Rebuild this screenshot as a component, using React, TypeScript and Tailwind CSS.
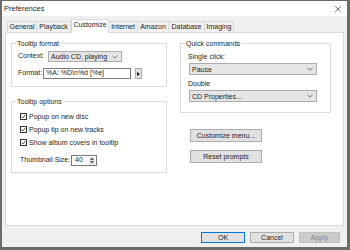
import React from 'react';

const tabs = [
  { name: 'General', w: 30 },
  { name: 'Playback', w: 34 },
  { name: 'Customize', w: 38 },
  { name: 'Internet', w: 29 },
  { name: 'Amazon', w: 31 },
  { name: 'Database', w: 36 },
  { name: 'Imaging', w: 29 },
];

const Chevron = () => (
  <svg width="6" height="4" viewBox="0 0 6 4" className="shrink-0">
    <path d="M0.5 0.8 L3 3.2 L5.5 0.8" fill="none" stroke="#555" strokeWidth="0.8" />
  </svg>
);

const Combo = ({ value, w, h }: { value: string; w: number; h: number }) => (
  <div
    className="flex items-center justify-between bg-[#e5e5e5] border border-[#acacac] pl-[2px] pr-[3px] shrink-0"
    style={{ width: w, height: h }}
  >
    <span className="leading-none">{value}</span>
    <Chevron />
  </div>
);

const Check = ({ label }: { label: string }) => (
  <div className="flex items-center h-[13px] gap-[2px]">
    <div className="w-[7px] h-[7px] border border-[#333] bg-white flex items-center justify-center">
      <svg width="5" height="5" viewBox="0 0 5 5">
        <path d="M0.6 2.6 L1.9 3.9 L4.4 0.9" fill="none" stroke="#222" strokeWidth="0.8" />
      </svg>
    </div>
    <span className="leading-none">{label}</span>
  </div>
);

const Group = ({ title, className, children }: { title: string; className: string; children: React.ReactNode }) => (
  <div className={`relative border border-[#dcdcdc] ${className}`}>
    <span className="absolute -top-[4px] left-[4px] bg-white px-[1px] leading-[8px]">{title}</span>
    {children}
  </div>
);

export default function App() {
  return (
    <div
      className="w-[350px] h-[250px] flex flex-col bg-[#f0f0f0] border-l-2 border-r-[3px] border-b-[3px] border-t border-[#6b6b6b] text-[7px] text-[#1e1e1e] overflow-hidden"
      style={{ fontFamily: '"Liberation Sans", Arial, sans-serif' }}
    >
      {/* title bar */}
      <div className="h-[15px] bg-white flex items-center justify-between pl-[2px] pr-[6px] shrink-0">
        <span className="text-[7.5px] leading-none">Preferences</span>
        <svg width="6" height="6" viewBox="0 0 6 6">
          <path d="M0.3 0.3 L5.7 5.7 M5.7 0.3 L0.3 5.7" stroke="#333" strokeWidth="0.7" />
        </svg>
      </div>

      {/* tabs */}
      <div className="h-[13px] mt-[3px] flex items-end pl-[5px] shrink-0">
        {tabs.map((t) =>
          t.name === 'Customize' ? (
            <div
              key={t.name}
              className="relative z-10 h-[14px] -mb-px bg-white border border-b-0 border-[#d9d9d9] flex items-center justify-center pb-[2px]"
              style={{ width: t.w }}
            >
              {t.name}
            </div>
          ) : (
            <div
              key={t.name}
              className="h-[11px] bg-[#f0f0f0] border border-b-0 border-l-0 first:border-l border-[#d9d9d9] flex items-center justify-center"
              style={{ width: t.w }}
            >
              {t.name}
            </div>
          )
        )}
      </div>

      {/* panel */}
      <div className="mx-[3px] h-[194px] bg-white border border-[#d9d9d9] flex shrink-0">
        {/* left column */}
        <div className="ml-[5px] w-[156px] flex flex-col pt-[10px]">
          <Group title="Tooltip format" className="h-[44px] pt-[7px] pl-[6px]">
            <div className="flex items-center h-[11px]">
              <span className="w-[30px]">Context:</span>
              <Combo value="Audio CD, playing" w={74} h={11} />
            </div>
            <div className="flex items-center h-[11px] mt-[6px]">
              <span className="w-[25px]">Format:</span>
              <div className="w-[88px] h-[11px] border border-[#7a7a7a] bg-white flex items-center pl-[2px]">
                %A: %D\n%d [%e]
              </div>
              <div className="ml-[4px] w-[7px] h-[11px] bg-[#e1e1e1] border border-[#adadad] flex items-center justify-center">
                <svg width="3" height="4" viewBox="0 0 3 4">
                  <path d="M0 0 L3 2 L0 4 Z" fill="#111" />
                </svg>
              </div>
            </div>
          </Group>

          <Group title="Tooltip options" className="h-[72px] mt-[14px] pt-[8px] pl-[8px]">
            <Check label="Popup on new disc" />
            <Check label="Popup tip on new tracks" />
            <Check label="Show album covers in tooltip" />
            <div className="flex items-center h-[11px] mt-[6px]">
              <span className="w-[51px]">Thumbnail Size:</span>
              <div className="w-[26px] h-[11px] border border-[#7a7a7a] bg-white flex items-center justify-between pl-[3px] pr-[1px]">
                <span>40</span>
                <div className="flex flex-col gap-[1px] w-[6px] h-[8px] bg-[#e5e5e5] items-center justify-center">
                  <svg width="4" height="3" viewBox="0 0 4 3">
                    <path d="M0 3 L2 0.5 L4 3 Z" fill="#555" />
                  </svg>
                  <svg width="4" height="3" viewBox="0 0 4 3">
                    <path d="M0 0 L2 2.5 L4 0 Z" fill="#555" />
                  </svg>
                </div>
              </div>
            </div>
          </Group>
        </div>

        {/* right column */}
        <div className="ml-[13px] w-[151px] flex flex-col pt-[10px]">
          <Group title="Quick commands" className="h-[70px] pt-[9px] pl-[7px]">
            <div className="leading-[8px]">Single click:</div>
            <div className="mt-[2px] ml-px">
              <Combo value="Pause" w={128} h={12} />
            </div>
            <div className="leading-[8px] mt-[5px]">Double</div>
            <div className="mt-[2px] ml-px">
              <Combo value="CD Properties..." w={128} h={12} />
            </div>
          </Group>
          <button className="mt-[16px] ml-[10px] w-[72px] h-[13px] bg-[#e1e1e1] border border-[#adadad] flex items-center justify-center leading-none">
            Customize menu...
          </button>
          <button className="mt-[8px] ml-[10px] w-[72px] h-[13px] bg-[#e1e1e1] border border-[#adadad] flex items-center justify-center leading-none">
            Reset prompts
          </button>
        </div>
      </div>

      {/* footer */}
      <div className="flex-1 flex justify-end items-start pt-[6px] pr-[7px] gap-[5px]">
        <button className="w-[44px] h-[11px] bg-[#e1e1e1] border border-[#0078d7] flex items-center justify-center leading-none">
          OK
        </button>
        <button className="w-[44px] h-[11px] bg-[#e1e1e1] border border-[#adadad] flex items-center justify-center leading-none">
          Cancel
        </button>
        <button className="w-[41px] h-[11px] bg-[#cccccc] border border-[#bfbfbf] text-[#838383] flex items-center justify-center leading-none">
          Apply
        </button>
      </div>
    </div>
  );
}
